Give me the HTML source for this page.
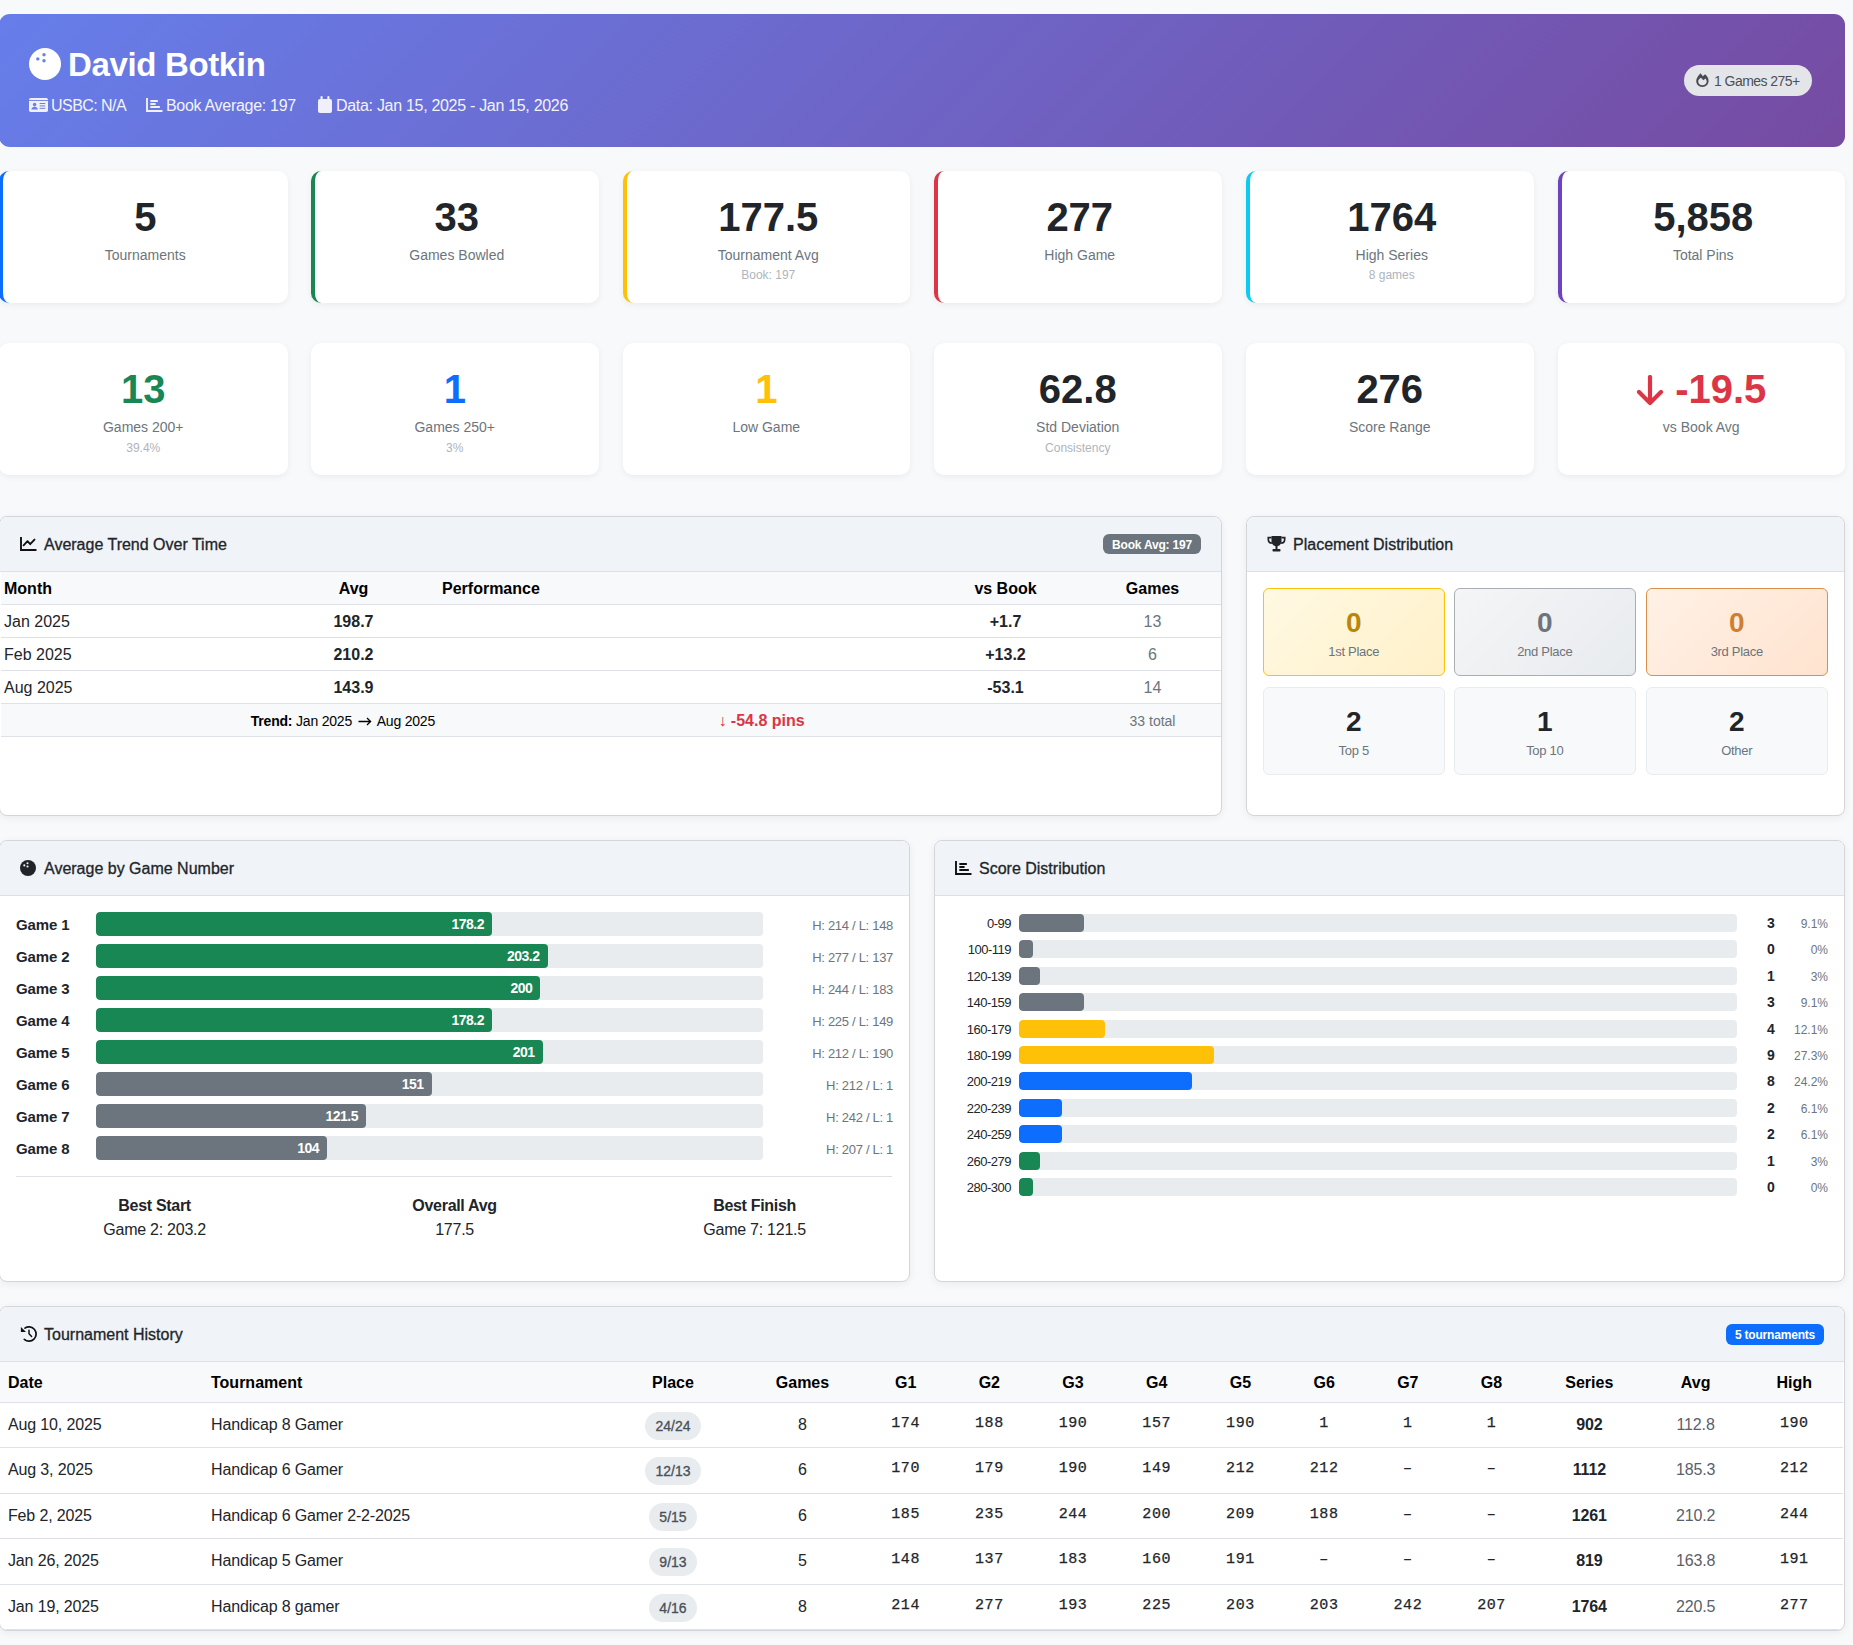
<!DOCTYPE html>
<html><head><meta charset="utf-8">
<style>
*{box-sizing:border-box;margin:0;padding:0}
html,body{width:1853px;height:1645px;overflow:hidden;background:#f8f9fa;font-family:"Liberation Sans",sans-serif;color:#212529}
.abs{position:absolute}
.hdr{position:absolute;left:-1px;top:14px;width:1846px;height:133px;border-radius:11px;background:linear-gradient(135deg,#667eea 0%,#764ba2 100%);color:#fff}
.card{position:absolute;background:#fff;border-radius:10px;box-shadow:0 2px 6px rgba(0,0,0,.06)}
.stat{text-align:center}
.stat .num{position:absolute;left:0;right:0;font-weight:700;font-size:40px;line-height:48px}
.stat .lbl{position:absolute;left:0;right:0;font-size:14px;color:#6c757d;line-height:20px}
.stat .sub{position:absolute;left:0;right:0;font-size:12px;color:#adb5bd;line-height:16px}
.sect{position:absolute;background:#fff;border:1px solid #d3d5d8;border-radius:8px;box-shadow:0 2px 8px rgba(0,0,0,.06);overflow:hidden}
.sh{position:absolute;left:0;top:0;right:0;height:55px;background:#f0f3f7;border-bottom:1px solid #dde1e5}
.sh .t{position:absolute;left:43px;top:18px;font-size:16px;line-height:20px;color:#212529;-webkit-text-stroke:0.3px #212529}

.badge{color:#fff;font-size:12px;font-weight:700;line-height:23px;letter-spacing:-0.2px;text-align:center;border-radius:6px;white-space:nowrap}
.tt{border-collapse:collapse;table-layout:fixed;font-size:16px}
.tt td{padding:5px 4px 3px 3px;height:33px;border-bottom:1px solid #dee2e6;line-height:24px;white-space:nowrap}
.tt .th td{background:#f8f9fa;font-weight:700;color:#000;padding-top:5px;padding-bottom:2px;height:32px}
.tt .c{text-align:center}.tt .r{text-align:right}.tt .b{font-weight:700}.tt .g{color:#6c757d}
.tt .tf td{background:#f8f9fa;font-size:14px}
.pbox{position:absolute;width:181.5px;height:88px;border-radius:6px;text-align:center}
.pn{position:absolute;left:0;right:0;top:16.5px;font-size:28px;font-weight:700;line-height:34px;color:#212529}
.pl{position:absolute;left:0;right:0;top:54px;letter-spacing:-0.3px;font-size:13px;line-height:18px;color:#6c757d}
.gl{position:absolute;left:16px;font-size:15px;font-weight:700;line-height:24px;margin-top:1px;color:#212529;letter-spacing:-0.1px}
.track{position:absolute;background:#e9ecef;border-radius:4px;overflow:hidden}
.fill{position:absolute;left:0;top:0;bottom:0;border-radius:4px;text-align:right}
.fill span{color:#fff;font-size:14px;font-weight:700;line-height:25px;padding-right:8px;letter-spacing:-0.5px}
.hl{position:absolute;right:16px;margin-top:2px;letter-spacing:-0.3px;font-size:13px;line-height:24px;color:#6c757d}
.bs{position:absolute;width:300px;text-align:center}
.bt{font-size:16px;font-weight:700;line-height:24px;letter-spacing:-0.3px}
.bv{font-size:16px;line-height:24px;color:#212529;letter-spacing:-0.25px}
.dl{position:absolute;left:0;width:77px;margin-top:1px;text-align:right;font-size:13px;line-height:18px;color:#212529;letter-spacing:-0.5px}
.dc{position:absolute;left:817px;width:40px;margin-top:0;text-align:center;font-size:14px;line-height:18px;font-weight:700}
.dp{position:absolute;right:15px;margin-top:1px;font-size:12px;line-height:18px;color:#6c757d}
.hh{position:absolute;font-size:16px;font-weight:700;line-height:42px;color:#000;white-space:nowrap}
.td{position:absolute;font-size:16px;line-height:43px;color:#212529;white-space:nowrap;letter-spacing:-0.15px}
.mono{font-family:"Liberation Mono",monospace;font-size:15px;letter-spacing:0.6px;margin-top:-1px;-webkit-text-stroke:0.25px #212529}
.ser{font-family:"Liberation Sans",sans-serif}
.sb{font-weight:700}
.avg{color:#5a6169}
.pill{display:inline-block;margin-top:9px;padding:0 10px;height:28px;line-height:29px;border-radius:14px;background:#e9ecef;color:#495057;font-size:14px;font-weight:400;-webkit-text-stroke:0.3px #495057}
.in{position:absolute;left:-1px;top:-1px;width:100%;height:100%}
</style></head><body>
<div class="hdr"><div class="abs" style="left:1px;top:0;width:1845px;height:133px">
  <svg class="abs" style="left:29px;top:34px" width="32" height="32" viewBox="0 0 32 32"><circle cx="16" cy="16" r="16" fill="#fff"/><circle cx="8.8" cy="10.9" r="1.7" fill="#6b7fe4"/><circle cx="15" cy="6.8" r="1.7" fill="#6b7fe4"/><circle cx="15" cy="12.8" r="1.7" fill="#6b7fe4"/></svg>
  <div class="abs" id="name" style="left:68px;top:31px;letter-spacing:-0.35px;font-size:33px;font-weight:700;line-height:40px;white-space:nowrap">David Botkin</div>
  <div class="abs" style="left:29px;top:82px;font-size:16px;line-height:20px;white-space:nowrap;color:#f3f3fb;letter-spacing:-0.3px">
    <span id="m1" class="abs" style="left:0;top:0">
      <svg class="abs" style="left:0;top:2.3px" width="19" height="14" viewBox="0 0 19 14"><rect x="0" y="0" width="19" height="14" rx="1.8" fill="#f0f0fa"/><rect x="0" y="2" width="19" height="0.9" fill="#6b7fe4"/><circle cx="5.6" cy="6.6" r="1.8" fill="#6b7fe4"/><path d="M2.4 11.6c0-1.9 1.4-2.9 3.2-2.9s3.2 1 3.2 2.9z" fill="#6b7fe4"/><rect x="10.6" y="5" width="5.6" height="1" fill="#6b7fe4"/><rect x="10.6" y="7.4" width="5.6" height="1" fill="#6b7fe4"/><rect x="10.6" y="9.8" width="5.6" height="1" fill="#6b7fe4"/></svg>
      <span style="position:absolute;left:22px;top:0;letter-spacing:-0.55px">USBC: N/A</span></span>
    <span class="abs" style="left:117px;top:0">
      <svg class="abs" style="left:0;top:2px" width="17" height="15" viewBox="0 0 17 15"><path d="M1 0v13h15.5" stroke="#f0f0fa" stroke-width="1.9" fill="none"/><rect x="4.2" y="2.1" width="7.8" height="1.8" rx=".6" fill="#f0f0fa"/><rect x="4.2" y="5.1" width="5.5" height="1.8" rx=".6" fill="#f0f0fa"/><rect x="4.2" y="8.1" width="9.8" height="1.8" rx=".6" fill="#f0f0fa"/></svg>
      <span style="position:absolute;left:20px;top:0">Book Average: 197</span></span>
    <span class="abs" style="left:289px;top:0">
      <svg class="abs" style="left:0;top:0" width="14" height="17" viewBox="0 0 14 17"><rect x="0" y="3" width="14" height="14" rx="2" fill="#f0f0fa"/><rect x="2.5" y="0" width="2.2" height="4" rx="1" fill="#f0f0fa"/><rect x="9.3" y="0" width="2.2" height="4" rx="1" fill="#f0f0fa"/></svg>
      <span style="position:absolute;left:18px;top:0">Data: Jan 15, 2025 - Jan 15, 2026</span></span>
  </div>
  <div class="abs" style="left:1684px;top:51px;width:128px;height:31px;border-radius:16px;background:#e4e5e8;color:#4a5058;font-size:14px;line-height:31px;white-space:nowrap">
    <svg class="abs" style="left:12px;top:7.8px" width="13" height="14.2" viewBox="0 0 13 14.2"><path fill-rule="evenodd" d="M4.6 0.2L6.9 3.2 9.1 1.3C11.3 3 12.6 5.5 12.6 8 12.6 11.4 9.8 14 6.4 14 3 14 .2 11.4 .2 8 .2 5 2.2 2.5 4.6.2zM5 4.8L7.3 7.2 9.5 5.6C10.3 6.5 10.7 7.6 10.7 8.6 10.7 10.9 8.7 12.3 6.4 12.3 4.1 12.3 2.2 10.9 2.2 8.6 2.2 7.2 3.3 5.9 5 4.8z" fill="#454c55"/></svg>
    <span class="abs" style="left:30px;top:1px;letter-spacing:-0.55px">1 Games 275+</span>
  </div>
</div></div>

<div class="card stat" style="left:-1px;top:171px;width:288.5px;height:132px;border-left:4px solid #0d6efd"><div class="num" style="top:22px;color:#212529">5</div><div class="lbl" style="top:74px">Tournaments</div></div>
<div class="card stat" style="left:311px;top:171px;width:287.5px;height:132px;border-left:4px solid #198754"><div class="num" style="top:22px;color:#212529">33</div><div class="lbl" style="top:74px">Games Bowled</div></div>
<div class="card stat" style="left:622.5px;top:171px;width:287.5px;height:132px;border-left:4px solid #ffc107"><div class="num" style="top:22px;color:#212529">177.5</div><div class="lbl" style="top:74px">Tournament Avg</div><div class="sub" style="top:96px">Book: 197</div></div>
<div class="card stat" style="left:934px;top:171px;width:287.5px;height:132px;border-left:4px solid #dc3545"><div class="num" style="top:22px;color:#212529">277</div><div class="lbl" style="top:74px">High Game</div></div>
<div class="card stat" style="left:1246px;top:171px;width:287.5px;height:132px;border-left:4px solid #0dcaf0"><div class="num" style="top:22px;color:#212529">1764</div><div class="lbl" style="top:74px">High Series</div><div class="sub" style="top:96px">8 games</div></div>
<div class="card stat" style="left:1557.5px;top:171px;width:287.5px;height:132px;border-left:4px solid #6f42c1"><div class="num" style="top:22px;color:#212529">5,858</div><div class="lbl" style="top:74px">Total Pins</div></div>
<div class="card stat" style="left:-1px;top:343px;width:288.5px;height:132px"><div class="num" style="top:22px;color:#198754">13</div><div class="lbl" style="top:74px">Games 200+</div><div class="sub" style="top:97px">39.4%</div></div>
<div class="card stat" style="left:311px;top:343px;width:287.5px;height:132px"><div class="num" style="top:22px;color:#0d6efd">1</div><div class="lbl" style="top:74px">Games 250+</div><div class="sub" style="top:97px">3%</div></div>
<div class="card stat" style="left:622.5px;top:343px;width:287.5px;height:132px"><div class="num" style="top:22px;color:#ffc107">1</div><div class="lbl" style="top:74px">Low Game</div></div>
<div class="card stat" style="left:934px;top:343px;width:287.5px;height:132px"><div class="num" style="top:22px;color:#212529">62.8</div><div class="lbl" style="top:74px">Std Deviation</div><div class="sub" style="top:97px">Consistency</div></div>
<div class="card stat" style="left:1246px;top:343px;width:287.5px;height:132px"><div class="num" style="top:22px;color:#212529">276</div><div class="lbl" style="top:74px">Score Range</div></div>
<div class="card stat" style="left:1557.5px;top:343px;width:287.5px;height:132px"><div class="num" style="top:22px;color:#dc3545"><svg style="vertical-align:-3px;margin-right:11px" width="28" height="31" viewBox="0 0 28 31"><path d="M14 2v26M3 17l11 11 11-11" stroke="#dc3545" stroke-width="4.2" fill="none" stroke-linecap="round" stroke-linejoin="round"/></svg>-19.5</div><div class="lbl" style="top:74px">vs Book Avg</div></div>
<!-- Trend card -->
<div class="sect" style="left:-1px;top:516px;width:1223px;height:300px">
  <div class="sh">
    <svg class="abs" style="left:20px;top:20px" width="17" height="15" viewBox="0 0 17 15"><path d="M1 0v13h15.5" stroke="#111" stroke-width="1.9" fill="none"/><path d="M3.6 8.3L7.5 4.2l2.7 3 4.3-4.6" stroke="#111" stroke-width="1.9" fill="none" stroke-linejoin="round" stroke-linecap="round"/></svg>
    <div class="t" style="left:44px">Average Trend Over Time</div>
    <div class="abs badge" style="left:1103px;top:17px;width:98px;height:20px;background:#6c757d">Book Avg: 197</div>
  </div>
  <table class="tt" style="position:absolute;left:1px;top:55px;width:1220px">
    <colgroup><col style="width:268px"><col style="width:170px"><col style="width:488px"><col style="width:158px"><col style="width:136px"></colgroup>
    <tr class="th"><td>Month</td><td class="c">Avg</td><td>Performance</td><td class="c">vs Book</td><td class="c">Games</td></tr>
    <tr><td>Jan 2025</td><td class="c b">198.7</td><td></td><td class="c b">+1.7</td><td class="c g">13</td></tr>
    <tr><td>Feb 2025</td><td class="c b">210.2</td><td></td><td class="c b">+13.2</td><td class="c g">6</td></tr>
    <tr><td>Aug 2025</td><td class="c b">143.9</td><td></td><td class="c b">-53.1</td><td class="c g">14</td></tr>
    <tr class="tf"><td colspan="2" class="r" style="color:#000;letter-spacing:-0.2px"><b>Trend:</b> Jan 2025 <svg width="14" height="9" viewBox="0 0 14 9" style="vertical-align:0px;margin:0 2px"><path d="M0.5 4.5h12M9 1l3.6 3.5L9 8" stroke="#000" stroke-width="1.3" fill="none"/></svg> Aug 2025</td><td colspan="2" class="c" style="color:#dc3545;font-weight:700;font-size:16px">&#8595; -54.8 pins</td><td class="c g">33 total</td></tr>
  </table>
</div>
<!-- Placement card -->
<div class="sect" style="left:1246px;top:516px;width:599px;height:300px">
  <div class="sh">
    <svg class="abs" style="left:20px;top:19px" width="19" height="16" viewBox="0 0 19 16"><path d="M4.5 0h10v5.3c0 2.8-2.2 5-5 5s-5-2.2-5-5z" fill="#212529"/><path d="M4.6 1.6H1.3v1.6c0 2.1 1.6 3.8 3.6 4M14.4 1.6h3.3v1.6c0 2.1-1.6 3.8-3.6 4" stroke="#212529" stroke-width="1.7" fill="none"/><rect x="8.5" y="9.5" width="2" height="3.5" fill="#212529"/><rect x="5.5" y="13" width="8" height="2.6" rx=".8" fill="#212529"/></svg>
    <div class="t" style="left:46px">Placement Distribution</div>
  </div>
  <div class="pbox" style="left:16px;top:71px;background:linear-gradient(135deg,#fff9e3,#fff1c9);border:1px solid #ffc107"><div class="pn" style="color:#b8860b">0</div><div class="pl">1st Place</div></div>
  <div class="pbox" style="left:207px;top:71px;background:linear-gradient(135deg,#f4f5f7,#e8ebee);border:1px solid #a9aeb3"><div class="pn" style="color:#6c757d">0</div><div class="pl">2nd Place</div></div>
  <div class="pbox" style="left:399px;top:71px;background:linear-gradient(135deg,#fff1e6,#ffe3cf);border:1px solid #d9904a"><div class="pn" style="color:#cd7f32">0</div><div class="pl">3rd Place</div></div>
  <div class="pbox" style="left:16px;top:170px;background:#f8f9fa;border:1px solid #e9ecef"><div class="pn">2</div><div class="pl">Top 5</div></div>
  <div class="pbox" style="left:207px;top:170px;background:#f8f9fa;border:1px solid #e9ecef"><div class="pn">1</div><div class="pl">Top 10</div></div>
  <div class="pbox" style="left:399px;top:170px;background:#f8f9fa;border:1px solid #e9ecef"><div class="pn">2</div><div class="pl">Other</div></div>
</div>

<div class="sect" style="left:-1px;top:840px;width:911px;height:442px">
<div class="sh"><svg class="abs" style="left:20px;top:19px" width="16" height="16" viewBox="0 0 16 16"><circle cx="8" cy="8" r="8" fill="#212529"/><circle cx="4.3" cy="5.4" r="1.05" fill="#f0f3f7"/><circle cx="7.5" cy="3.3" r="1.05" fill="#f0f3f7"/><circle cx="7.5" cy="6.5" r="1.05" fill="#f0f3f7"/></svg><div class="t" style="left:44px">Average by Game Number</div></div><div class="in" style="left:0">
<div class="gl" style="top:72px">Game 1</div><div class="track" style="left:96px;top:72px;width:666.6px;height:24px"><div class="fill" style="width:396.0px;background:#198754"><span>178.2</span></div></div><div class="hl" style="top:72px">H: 214 / L: 148</div>
<div class="gl" style="top:104px">Game 2</div><div class="track" style="left:96px;top:104px;width:666.6px;height:24px"><div class="fill" style="width:451.5px;background:#198754"><span>203.2</span></div></div><div class="hl" style="top:104px">H: 277 / L: 137</div>
<div class="gl" style="top:136px">Game 3</div><div class="track" style="left:96px;top:136px;width:666.6px;height:24px"><div class="fill" style="width:444.4px;background:#198754"><span>200</span></div></div><div class="hl" style="top:136px">H: 244 / L: 183</div>
<div class="gl" style="top:168px">Game 4</div><div class="track" style="left:96px;top:168px;width:666.6px;height:24px"><div class="fill" style="width:396.0px;background:#198754"><span>178.2</span></div></div><div class="hl" style="top:168px">H: 225 / L: 149</div>
<div class="gl" style="top:200px">Game 5</div><div class="track" style="left:96px;top:200px;width:666.6px;height:24px"><div class="fill" style="width:446.6px;background:#198754"><span>201</span></div></div><div class="hl" style="top:200px">H: 212 / L: 190</div>
<div class="gl" style="top:232px">Game 6</div><div class="track" style="left:96px;top:232px;width:666.6px;height:24px"><div class="fill" style="width:335.5px;background:#6c757d"><span>151</span></div></div><div class="hl" style="top:232px">H: 212 / L: 1</div>
<div class="gl" style="top:264px">Game 7</div><div class="track" style="left:96px;top:264px;width:666.6px;height:24px"><div class="fill" style="width:270.0px;background:#6c757d"><span>121.5</span></div></div><div class="hl" style="top:264px">H: 242 / L: 1</div>
<div class="gl" style="top:296px">Game 8</div><div class="track" style="left:96px;top:296px;width:666.6px;height:24px"><div class="fill" style="width:231.1px;background:#6c757d"><span>104</span></div></div><div class="hl" style="top:296px">H: 207 / L: 1</div>
<div class="abs" style="left:16px;top:336px;width:876px;height:1px;background:#dee2e6"></div>
<div class="bs" style="left:4.599999999999994px;top:354px"><div class="bt">Best Start</div><div class="bv">Game 2: 203.2</div></div>
<div class="bs" style="left:304.6px;top:354px"><div class="bt">Overall Avg</div><div class="bv">177.5</div></div>
<div class="bs" style="left:604.6px;top:354px"><div class="bt">Best Finish</div><div class="bv">Game 7: 121.5</div></div>
</div></div>
<div class="sect" style="left:934px;top:840px;width:911px;height:442px">
<div class="sh"><svg class="abs" style="left:20px;top:20px" width="17" height="15" viewBox="0 0 17 15"><path d="M1 0v13h15.5" stroke="#111" stroke-width="1.9" fill="none"/><rect x="4.2" y="2.1" width="7.8" height="1.8" rx=".6" fill="#111"/><rect x="4.2" y="5.1" width="5.5" height="1.8" rx=".6" fill="#111"/><rect x="4.2" y="8.1" width="9.8" height="1.8" rx=".6" fill="#111"/></svg><div class="t" style="left:44px">Score Distribution</div></div><div class="in">
<div class="dl" style="top:74.0px">0-99</div><div class="track" style="left:84.5px;top:74.0px;width:718.5px;height:18px"><div class="fill" style="width:65.3px;background:#6c757d"></div></div><div class="dc" style="top:74.0px">3</div><div class="dp" style="top:74.0px">9.1%</div>
<div class="dl" style="top:100.4px">100-119</div><div class="track" style="left:84.5px;top:100.4px;width:718.5px;height:18px"><div class="fill" style="width:14.4px;background:#6c757d"></div></div><div class="dc" style="top:100.4px">0</div><div class="dp" style="top:100.4px">0%</div>
<div class="dl" style="top:126.8px">120-139</div><div class="track" style="left:84.5px;top:126.8px;width:718.5px;height:18px"><div class="fill" style="width:21.5px;background:#6c757d"></div></div><div class="dc" style="top:126.8px">1</div><div class="dp" style="top:126.8px">3%</div>
<div class="dl" style="top:153.2px">140-159</div><div class="track" style="left:84.5px;top:153.2px;width:718.5px;height:18px"><div class="fill" style="width:65.3px;background:#6c757d"></div></div><div class="dc" style="top:153.2px">3</div><div class="dp" style="top:153.2px">9.1%</div>
<div class="dl" style="top:179.6px">160-179</div><div class="track" style="left:84.5px;top:179.6px;width:718.5px;height:18px"><div class="fill" style="width:86.8px;background:#ffc107"></div></div><div class="dc" style="top:179.6px">4</div><div class="dp" style="top:179.6px">12.1%</div>
<div class="dl" style="top:206.0px">180-199</div><div class="track" style="left:84.5px;top:206.0px;width:718.5px;height:18px"><div class="fill" style="width:195.9px;background:#ffc107"></div></div><div class="dc" style="top:206.0px">9</div><div class="dp" style="top:206.0px">27.3%</div>
<div class="dl" style="top:232.4px">200-219</div><div class="track" style="left:84.5px;top:232.4px;width:718.5px;height:18px"><div class="fill" style="width:173.7px;background:#0d6efd"></div></div><div class="dc" style="top:232.4px">8</div><div class="dp" style="top:232.4px">24.2%</div>
<div class="dl" style="top:258.8px">220-239</div><div class="track" style="left:84.5px;top:258.8px;width:718.5px;height:18px"><div class="fill" style="width:43.8px;background:#0d6efd"></div></div><div class="dc" style="top:258.8px">2</div><div class="dp" style="top:258.8px">6.1%</div>
<div class="dl" style="top:285.2px">240-259</div><div class="track" style="left:84.5px;top:285.2px;width:718.5px;height:18px"><div class="fill" style="width:43.8px;background:#0d6efd"></div></div><div class="dc" style="top:285.2px">2</div><div class="dp" style="top:285.2px">6.1%</div>
<div class="dl" style="top:311.6px">260-279</div><div class="track" style="left:84.5px;top:311.6px;width:718.5px;height:18px"><div class="fill" style="width:21.5px;background:#198754"></div></div><div class="dc" style="top:311.6px">1</div><div class="dp" style="top:311.6px">3%</div>
<div class="dl" style="top:338.0px">280-300</div><div class="track" style="left:84.5px;top:338.0px;width:718.5px;height:18px"><div class="fill" style="width:14.4px;background:#198754"></div></div><div class="dc" style="top:338.0px">0</div><div class="dp" style="top:338.0px">0%</div>
</div></div>
<div class="sect" style="left:-1px;top:1306px;width:1846px;height:325px">
<div class="sh"><svg class="abs" style="left:20px;top:18px" width="18" height="18" viewBox="0 0 18 18"><path d="M4.3 14.4A7.15 7.15 0 1 0 4.9 3.1" stroke="#111" stroke-width="1.7" fill="none" stroke-linecap="round"/><path d="M0.9 2v5.1h5.1z" fill="#111"/><path d="M9 5.2v3.5l2.6 2.8" stroke="#111" stroke-width="1.5" fill="none" stroke-linecap="round" stroke-linejoin="round"/></svg><div class="t" style="left:44px">Tournament History</div><div class="abs badge" style="left:1726px;top:17px;width:98px;height:21px;background:#0d6efd">5 tournaments</div></div><div class="in" style="left:0">
<div class="abs" style="left:0;top:56px;width:1843px;height:41px;background:#f8f9fa;border-bottom:1px solid #dee2e6"></div>
<div class="hh" style="left:8px;top:56px">Date</div>
<div class="hh" style="left:211px;top:56px">Tournament</div>
<div class="hh" style="left:604.8px;width:136.4000000000001px;text-align:center;top:56px">Place</div>
<div class="hh" style="left:741.2px;width:122.59999999999991px;text-align:center;top:56px">Games</div>
<div class="hh" style="left:863.8px;width:83.70000000000005px;text-align:center;top:56px">G1</div>
<div class="hh" style="left:947.5px;width:83.70000000000005px;text-align:center;top:56px">G2</div>
<div class="hh" style="left:1031.2px;width:83.70000000000005px;text-align:center;top:56px">G3</div>
<div class="hh" style="left:1114.9px;width:83.70000000000005px;text-align:center;top:56px">G4</div>
<div class="hh" style="left:1198.6000000000001px;width:83.70000000000005px;text-align:center;top:56px">G5</div>
<div class="hh" style="left:1282.3000000000002px;width:83.70000000000005px;text-align:center;top:56px">G6</div>
<div class="hh" style="left:1366.0000000000002px;width:83.70000000000005px;text-align:center;top:56px">G7</div>
<div class="hh" style="left:1449.7000000000003px;width:83.70000000000005px;text-align:center;top:56px">G8</div>
<div class="hh" style="left:1533px;width:112.59999999999991px;text-align:center;top:56px">Series</div>
<div class="hh" style="left:1645.6px;width:100.0px;text-align:center;top:56px">Avg</div>
<div class="hh" style="left:1745.6px;width:97.40000000000009px;text-align:center;top:56px">High</div>
<div class="abs" style="left:0;top:141.4px;width:1843px;height:1px;background:#dee2e6"></div>
<div class="td" style="left:8px;top:97px">Aug 10, 2025</div>
<div class="td" style="left:211px;top:97px">Handicap 8 Gamer</div>
<div class="abs" style="left:604.8px;width:136.4000000000001px;top:97px;height:45px;text-align:center"><span class="pill">24/24</span></div>
<div class="td ser" style="left:741.2px;width:122.59999999999991px;text-align:center;top:97px">8</div>
<div class="td mono" style="left:863.8px;width:83.70000000000005px;text-align:center;top:97px">174</div>
<div class="td mono" style="left:947.5px;width:83.70000000000005px;text-align:center;top:97px">188</div>
<div class="td mono" style="left:1031.2px;width:83.70000000000005px;text-align:center;top:97px">190</div>
<div class="td mono" style="left:1114.9px;width:83.70000000000005px;text-align:center;top:97px">157</div>
<div class="td mono" style="left:1198.6000000000001px;width:83.70000000000005px;text-align:center;top:97px">190</div>
<div class="td mono" style="left:1282.3000000000002px;width:83.70000000000005px;text-align:center;top:97px">1</div>
<div class="td mono" style="left:1366.0000000000002px;width:83.70000000000005px;text-align:center;top:97px">1</div>
<div class="td mono" style="left:1449.7000000000003px;width:83.70000000000005px;text-align:center;top:97px">1</div>
<div class="td sb" style="left:1533px;width:112.59999999999991px;text-align:center;top:97px">902</div>
<div class="td avg" style="left:1645.6px;width:100.0px;text-align:center;top:97px">112.8</div>
<div class="td mono" style="left:1745.6px;width:97.40000000000009px;text-align:center;top:97px">190</div>
<div class="abs" style="left:0;top:186.8px;width:1843px;height:1px;background:#dee2e6"></div>
<div class="td" style="left:8px;top:142.4px">Aug 3, 2025</div>
<div class="td" style="left:211px;top:142.4px">Handicap 6 Gamer</div>
<div class="abs" style="left:604.8px;width:136.4000000000001px;top:142.4px;height:45px;text-align:center"><span class="pill">12/13</span></div>
<div class="td ser" style="left:741.2px;width:122.59999999999991px;text-align:center;top:142.4px">6</div>
<div class="td mono" style="left:863.8px;width:83.70000000000005px;text-align:center;top:142.4px">170</div>
<div class="td mono" style="left:947.5px;width:83.70000000000005px;text-align:center;top:142.4px">179</div>
<div class="td mono" style="left:1031.2px;width:83.70000000000005px;text-align:center;top:142.4px">190</div>
<div class="td mono" style="left:1114.9px;width:83.70000000000005px;text-align:center;top:142.4px">149</div>
<div class="td mono" style="left:1198.6000000000001px;width:83.70000000000005px;text-align:center;top:142.4px">212</div>
<div class="td mono" style="left:1282.3000000000002px;width:83.70000000000005px;text-align:center;top:142.4px">212</div>
<div class="td mono" style="left:1366.0000000000002px;width:83.70000000000005px;text-align:center;top:142.4px">–</div>
<div class="td mono" style="left:1449.7000000000003px;width:83.70000000000005px;text-align:center;top:142.4px">–</div>
<div class="td sb" style="left:1533px;width:112.59999999999991px;text-align:center;top:142.4px">1112</div>
<div class="td avg" style="left:1645.6px;width:100.0px;text-align:center;top:142.4px">185.3</div>
<div class="td mono" style="left:1745.6px;width:97.40000000000009px;text-align:center;top:142.4px">212</div>
<div class="abs" style="left:0;top:232.2px;width:1843px;height:1px;background:#dee2e6"></div>
<div class="td" style="left:8px;top:187.8px">Feb 2, 2025</div>
<div class="td" style="left:211px;top:187.8px">Handicap 6 Gamer 2-2-2025</div>
<div class="abs" style="left:604.8px;width:136.4000000000001px;top:187.8px;height:45px;text-align:center"><span class="pill">5/15</span></div>
<div class="td ser" style="left:741.2px;width:122.59999999999991px;text-align:center;top:187.8px">6</div>
<div class="td mono" style="left:863.8px;width:83.70000000000005px;text-align:center;top:187.8px">185</div>
<div class="td mono" style="left:947.5px;width:83.70000000000005px;text-align:center;top:187.8px">235</div>
<div class="td mono" style="left:1031.2px;width:83.70000000000005px;text-align:center;top:187.8px">244</div>
<div class="td mono" style="left:1114.9px;width:83.70000000000005px;text-align:center;top:187.8px">200</div>
<div class="td mono" style="left:1198.6000000000001px;width:83.70000000000005px;text-align:center;top:187.8px">209</div>
<div class="td mono" style="left:1282.3000000000002px;width:83.70000000000005px;text-align:center;top:187.8px">188</div>
<div class="td mono" style="left:1366.0000000000002px;width:83.70000000000005px;text-align:center;top:187.8px">–</div>
<div class="td mono" style="left:1449.7000000000003px;width:83.70000000000005px;text-align:center;top:187.8px">–</div>
<div class="td sb" style="left:1533px;width:112.59999999999991px;text-align:center;top:187.8px">1261</div>
<div class="td avg" style="left:1645.6px;width:100.0px;text-align:center;top:187.8px">210.2</div>
<div class="td mono" style="left:1745.6px;width:97.40000000000009px;text-align:center;top:187.8px">244</div>
<div class="abs" style="left:0;top:277.6px;width:1843px;height:1px;background:#dee2e6"></div>
<div class="td" style="left:8px;top:233.2px">Jan 26, 2025</div>
<div class="td" style="left:211px;top:233.2px">Handicap 5 Gamer</div>
<div class="abs" style="left:604.8px;width:136.4000000000001px;top:233.2px;height:45px;text-align:center"><span class="pill">9/13</span></div>
<div class="td ser" style="left:741.2px;width:122.59999999999991px;text-align:center;top:233.2px">5</div>
<div class="td mono" style="left:863.8px;width:83.70000000000005px;text-align:center;top:233.2px">148</div>
<div class="td mono" style="left:947.5px;width:83.70000000000005px;text-align:center;top:233.2px">137</div>
<div class="td mono" style="left:1031.2px;width:83.70000000000005px;text-align:center;top:233.2px">183</div>
<div class="td mono" style="left:1114.9px;width:83.70000000000005px;text-align:center;top:233.2px">160</div>
<div class="td mono" style="left:1198.6000000000001px;width:83.70000000000005px;text-align:center;top:233.2px">191</div>
<div class="td mono" style="left:1282.3000000000002px;width:83.70000000000005px;text-align:center;top:233.2px">–</div>
<div class="td mono" style="left:1366.0000000000002px;width:83.70000000000005px;text-align:center;top:233.2px">–</div>
<div class="td mono" style="left:1449.7000000000003px;width:83.70000000000005px;text-align:center;top:233.2px">–</div>
<div class="td sb" style="left:1533px;width:112.59999999999991px;text-align:center;top:233.2px">819</div>
<div class="td avg" style="left:1645.6px;width:100.0px;text-align:center;top:233.2px">163.8</div>
<div class="td mono" style="left:1745.6px;width:97.40000000000009px;text-align:center;top:233.2px">191</div>
<div class="abs" style="left:0;top:323px;width:1843px;height:1px;background:#dee2e6"></div>
<div class="td" style="left:8px;top:278.6px">Jan 19, 2025</div>
<div class="td" style="left:211px;top:278.6px">Handicap 8 gamer</div>
<div class="abs" style="left:604.8px;width:136.4000000000001px;top:278.6px;height:45px;text-align:center"><span class="pill">4/16</span></div>
<div class="td ser" style="left:741.2px;width:122.59999999999991px;text-align:center;top:278.6px">8</div>
<div class="td mono" style="left:863.8px;width:83.70000000000005px;text-align:center;top:278.6px">214</div>
<div class="td mono" style="left:947.5px;width:83.70000000000005px;text-align:center;top:278.6px">277</div>
<div class="td mono" style="left:1031.2px;width:83.70000000000005px;text-align:center;top:278.6px">193</div>
<div class="td mono" style="left:1114.9px;width:83.70000000000005px;text-align:center;top:278.6px">225</div>
<div class="td mono" style="left:1198.6000000000001px;width:83.70000000000005px;text-align:center;top:278.6px">203</div>
<div class="td mono" style="left:1282.3000000000002px;width:83.70000000000005px;text-align:center;top:278.6px">203</div>
<div class="td mono" style="left:1366.0000000000002px;width:83.70000000000005px;text-align:center;top:278.6px">242</div>
<div class="td mono" style="left:1449.7000000000003px;width:83.70000000000005px;text-align:center;top:278.6px">207</div>
<div class="td sb" style="left:1533px;width:112.59999999999991px;text-align:center;top:278.6px">1764</div>
<div class="td avg" style="left:1645.6px;width:100.0px;text-align:center;top:278.6px">220.5</div>
<div class="td mono" style="left:1745.6px;width:97.40000000000009px;text-align:center;top:278.6px">277</div>
</div></div>
</body></html>
